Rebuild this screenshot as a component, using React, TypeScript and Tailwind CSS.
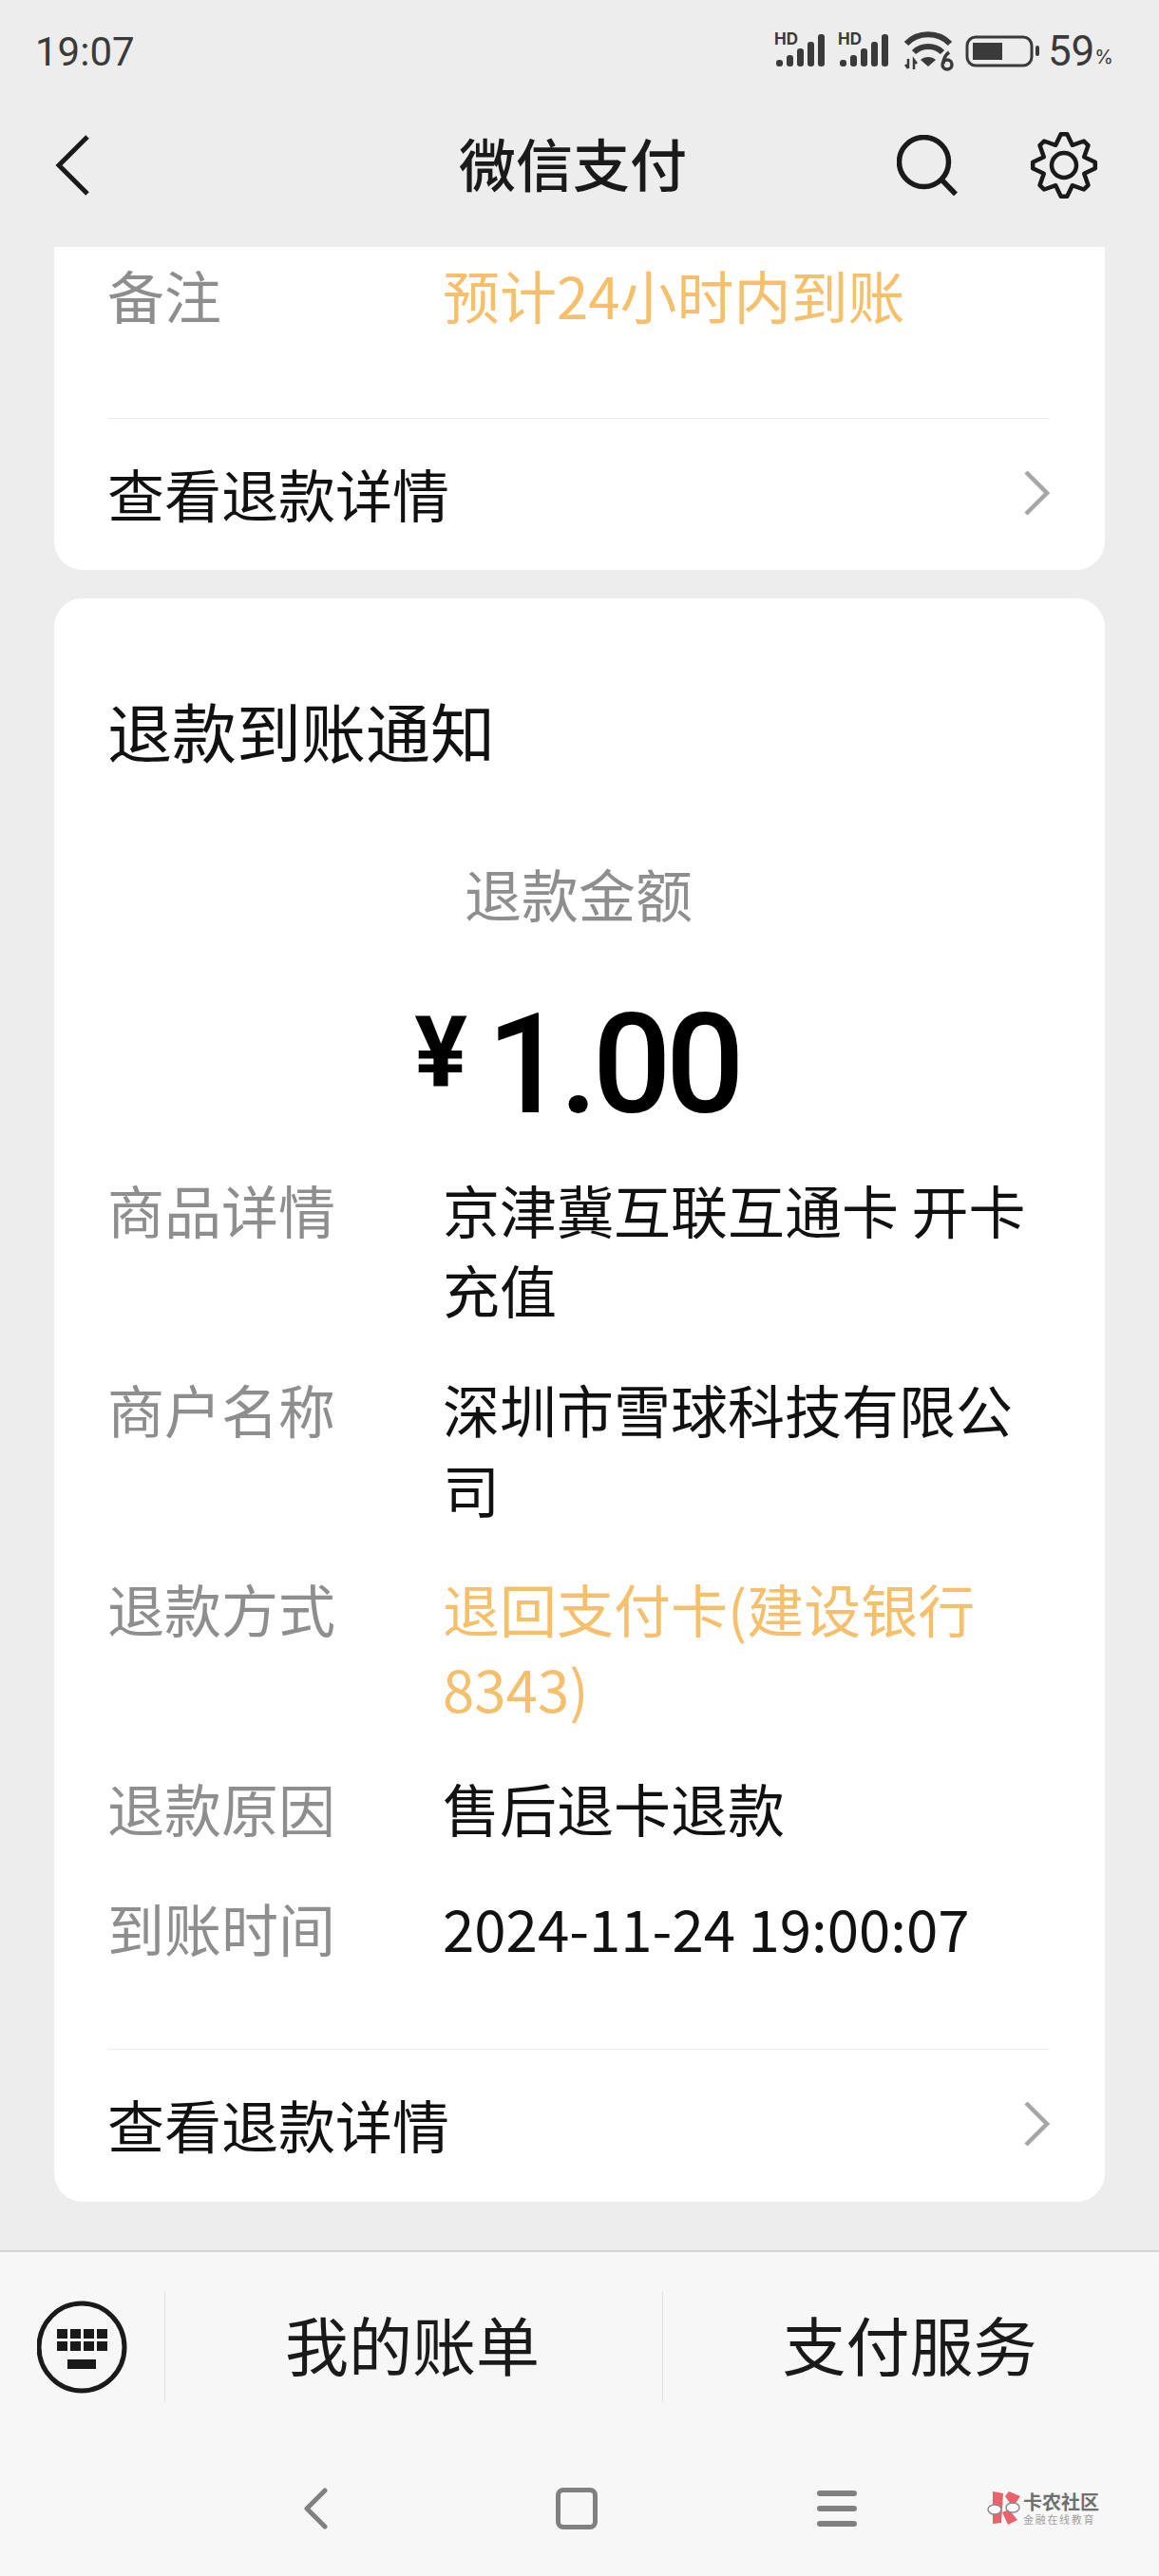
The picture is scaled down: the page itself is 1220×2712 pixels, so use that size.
const CJK = "font-['Noto_Sans_CJK_SC','Noto_Sans',sans-serif]";

// eight narrow teeth with a single valley point between each pair
const gearPath = () => {
  const pts: string[] = [];
  for (let i = 0; i < 8; i++) {
    const a = (i * Math.PI) / 4 - Math.PI / 2;
    [
      [33, a - 0.1],
      [33, a + 0.1],
      [23, a + Math.PI / 8],
    ].forEach(([r, t]) => pts.push(`${(36 + r * Math.cos(t)).toFixed(1)} ${(36 + r * Math.sin(t)).toFixed(1)}`));
  }
  return `M${pts.join("L")}Z`;
};

const StatusIcons = () => (
  <div className="flex items-center">
    {[0, 1].map((i) => (
      <svg key={i} width="56" height="40" viewBox="0 0 56 40" className="mr-[11px] overflow-visible text-[#3a3a3a]" fill="currentColor">
        <text x="0" y="13" fontSize="17" fontWeight="700" fontFamily="Inter, sans-serif">HD</text>
        <rect x="2" y="29" width="7" height="7" rx="3" />
        <rect x="13" y="24" width="7" height="12" rx="3" />
        <rect x="24" y="17" width="7" height="19" rx="3" />
        <rect x="35" y="10" width="7" height="26" rx="3" />
        <rect x="46" y="2" width="7" height="34" rx="3" />
      </svg>
    ))}
    <svg width="54" height="44" viewBox="0 0 54 44" className="ml-[2px]">
      <path d="M3 14C15 1 37 1 49 14" fill="none" stroke="#3a3a3a" strokeWidth="6" />
      <path d="M11 23c8-8 22-8 30 0" fill="none" stroke="#3a3a3a" strokeWidth="6" />
      <path d="M18 31c4-4 12-4 16 0l-8 7z" fill="#3a3a3a" />
      <path d="M5 30v10M2 36l3 4M11 41V31l3 4" fill="none" stroke="#3a3a3a" strokeWidth="2.5" />
      <circle cx="46" cy="36" r="5" fill="none" stroke="#3a3a3a" strokeWidth="3.5" />
      <path d="M42 35c0-5 2-9 6-12" fill="none" stroke="#3a3a3a" strokeWidth="3.5" />
    </svg>
    <svg width="78" height="36" viewBox="0 0 78 36" className="ml-[11px]">
      <rect x="2" y="3" width="68" height="30" rx="9" fill="none" stroke="#3a3a3a" strokeWidth="3" />
      <rect x="8" y="9" width="31" height="18" fill="#3a3a3a" />
      <rect x="74" y="12" width="4" height="11" rx="2" fill="#3a3a3a" />
    </svg>
    <span className="ml-[9px] font-['Roboto',sans-serif] text-[44px] leading-none text-[#3a3a3a]">59</span>
    <span className="mt-[12px] font-['Inter',sans-serif] text-[20px] leading-none text-[#3a3a3a]">%</span>
  </div>
);

const Chevron = () => (
  <svg width="28" height="50" viewBox="0 0 28 50" fill="none" stroke="#a6a6a6" strokeWidth="4.5">
    <path d="M3 3l22 22L3 47" />
  </svg>
);

const DetailLink = () => (
  <div className="flex h-[160px] items-center justify-between border-t border-[#ececec] pb-[4px]">
    <span className="text-[60px] leading-[84px] text-[#111]">查看退款详情</span>
    <Chevron />
  </div>
);

const Row = ({ label, children, accent }: { label: string; children: React.ReactNode; accent?: boolean }) => (
  <div className="flex">
    <div className="w-[353px] shrink-0 text-[60px] leading-[84px] text-[#8e8e8e]">{label}</div>
    <div className={`w-[640px] text-[60px] leading-[84px] ${accent ? "text-[#f5bf6b]" : "text-[#111]"}`}>{children}</div>
  </div>
);

export default function App() {
  return (
    <div className={`flex h-[2712px] w-[1220px] flex-col overflow-hidden bg-[#ededed] ${CJK}`}>
      <div className="flex h-[260px] shrink-0 flex-col">
        <div className="flex h-[108px] items-center justify-between pl-[37px] pr-[48px]">
          <span className="font-['Roboto',sans-serif] text-[42px] text-[#3a3a3a]">19:07</span>
          <StatusIcons />
        </div>
        <div className="flex h-[132px] items-center pl-[56px] pr-[64px]">
          <svg width="40" height="64" viewBox="0 0 40 64" fill="none" stroke="#1a1a1a" strokeWidth="5">
            <path d="M36 2L6 32l30 30" />
          </svg>
          <div className="mb-[6px] flex-1 pl-[166px] text-center text-[60px] leading-none font-medium text-[#1a1a1a]">微信支付</div>
          <div className="flex items-center gap-[76px]">
            <svg width="64" height="64" viewBox="0 0 64 64" fill="none" stroke="#1a1a1a" strokeWidth="5.5">
              <circle cx="28.5" cy="28.5" r="26" />
              <path d="M47 47l15 15.5" />
            </svg>
            <svg width="72" height="72" viewBox="0 0 72 72" fill="none" stroke="#1a1a1a" strokeWidth="4.5" strokeLinejoin="round">
              <path d={gearPath()} />
              <circle cx="36" cy="36" r="13" />
            </svg>
          </div>
        </div>
      </div>

      <div className="flex flex-1 flex-col gap-[30px]">
        <div className="mx-[57px] h-[340px] rounded-b-[30px] bg-white pl-[56px] pr-[58px]">
          <div className="flex h-[180px] pt-[8px]">
            <div className="w-[353px] text-[60px] leading-[84px] text-[#8e8e8e]">备注</div>
            <div className="text-[60px] leading-[84px] text-[#f5bf6b]">预计24小时内到账</div>
          </div>
          <DetailLink />
        </div>

        <div className="mx-[57px] h-[1688px] rounded-[30px] bg-white pl-[56px] pr-[58px]">
          <div className="pt-[92px] text-[68px] leading-[94px] text-[#111]">退款到账通知</div>
          <div className="mt-[82px] text-center text-[60px] leading-[84px] text-[#8e8e8e]">退款金额</div>
          <div className="mt-[72px] flex h-[136px] items-start justify-center pr-[4px] font-['Roboto',sans-serif] font-medium text-black">
            <span className="mr-[20px] text-[104px] leading-[108px] font-bold">¥</span>
            <span className="text-[146px] leading-[136px] tracking-[-6px]">1.00</span>
          </div>
          <div className="mt-[41px] flex flex-col gap-[42px]">
            <Row label="商品详情">京津冀互联互通卡 开卡充值</Row>
            <Row label="商户名称">深圳市雪球科技有限公司</Row>
            <Row label="退款方式" accent>退回支付卡(建设银行8343)</Row>
            <Row label="退款原因">售后退卡退款</Row>
            <Row label="到账时间">2024-11-24 19:00:07</Row>
          </div>
          <div className="mt-[86px]">
            <DetailLink />
          </div>
        </div>
      </div>

      <div className="h-[343px] shrink-0 border-t-2 border-[#d4d4d4] bg-[#f7f7f7]">
        <div className="flex h-[200px] items-center">
          <div className="flex w-[173px] items-center justify-center">
            <svg width="96" height="98" viewBox="0 0 96 98">
              <ellipse cx="47" cy="49" rx="45" ry="46" fill="none" stroke="#1a1a1a" strokeWidth="5" />
              {[21, 35, 49, 63].flatMap((x) => [30, 43].map((y) => <rect key={`${x}-${y}`} x={x} y={y} width="11" height="10" fill="#1a1a1a" />))}
              <rect x="32" y="62" width="30" height="10" fill="#1a1a1a" />
            </svg>
          </div>
          <div className="flex h-[116px] w-[524px] items-center justify-center border-l border-[#e0e0e0] pb-[8px] pr-[3px] text-[67px] text-[#1a1a1a]">我的账单</div>
          <div className="flex h-[116px] flex-1 items-center justify-center border-l border-[#e0e0e0] pb-[8px] pr-[3px] text-[67px] text-[#1a1a1a]">支付服务</div>
        </div>
        <div className="flex h-[140px] items-center pl-[319px]">
          <svg width="26" height="44" viewBox="0 0 26 44" fill="none" stroke="#808080" strokeWidth="5" strokeLinecap="round" strokeLinejoin="round">
            <path d="M23 3L4 22l19 19" />
          </svg>
          <div className="ml-[240px] h-[44px] w-[44px] rounded-[8px] border-[5px] border-[#808080]"></div>
          <div className="ml-[231px] flex w-[42px] flex-col gap-[10px]">
            <div className="h-[6px] rounded bg-[#808080]"></div>
            <div className="h-[6px] rounded bg-[#808080]"></div>
            <div className="h-[6px] rounded bg-[#808080]"></div>
          </div>
          <div className="ml-[137px] flex items-center">
            <svg width="36" height="38" viewBox="0 0 36 38">
              <path d="M6 1l11 2-2 31-9 1z" fill="#e8636b" />
              <path d="M19 6l4-5 12 5-8 12z" fill="#e8636b" />
              <path d="M16 23l7-3 9 11-10 5z" fill="#e8636b" />
              <ellipse cx="8" cy="20" rx="7" ry="5" fill="#fff" stroke="#8a8a8a" strokeWidth="1.5" />
              <ellipse cx="27" cy="18" rx="7" ry="5" fill="#fff" stroke="#8a8a8a" strokeWidth="1.5" />
            </svg>
            <div className="ml-[2px] flex flex-col">
              <span className="text-[20px] leading-[22px] font-bold text-[#6f6f6f]">卡农社区</span>
              <span className="text-[11px] leading-[14px] tracking-[1.7px] text-[#a0a0a0]">金融在线教育</span>
            </div>
          </div>
        </div>
      </div>
    </div>
  );
}
